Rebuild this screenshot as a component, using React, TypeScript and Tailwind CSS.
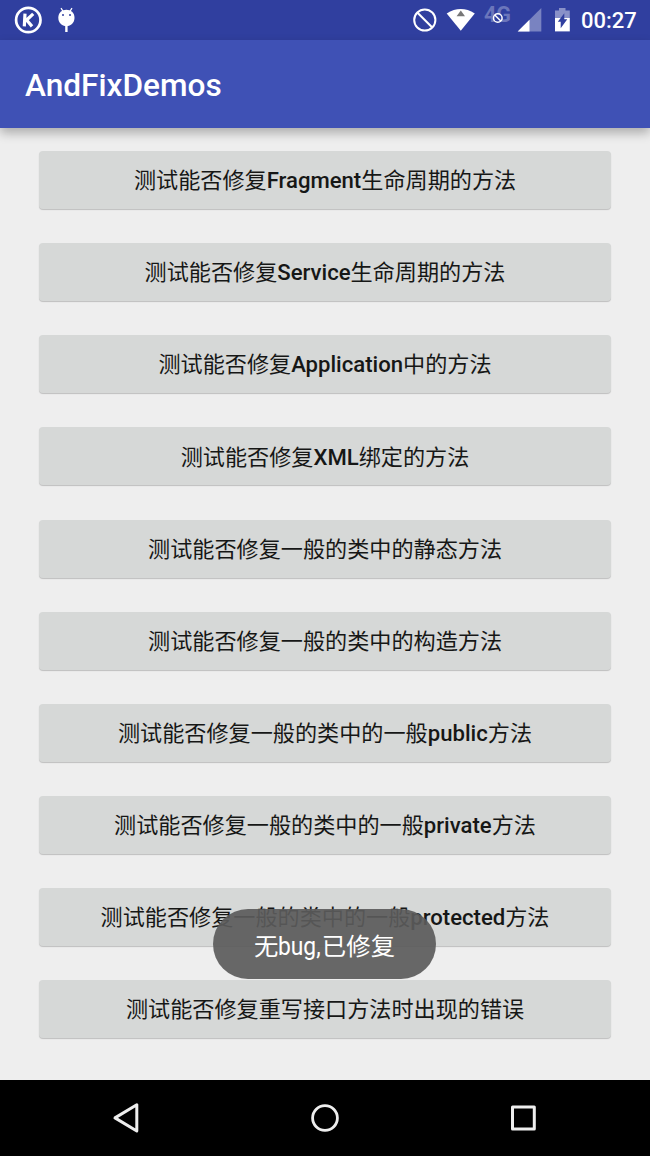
import React from "react";

const buttons = [
  ["测试能否修复", "Fragment", "生命周期的方法"],
  ["测试能否修复", "Service", "生命周期的方法"],
  ["测试能否修复", "Application", "中的方法"],
  ["测试能否修复", "XML", "绑定的方法"],
  ["测试能否修复一般的类中的静态方法"],
  ["测试能否修复一般的类中的构造方法"],
  ["测试能否修复一般的类中的一般", "public", "方法"],
  ["测试能否修复一般的类中的一般", "private", "方法"],
  ["测试能否修复一般的类中的一般", "protected", "方法"],
  ["测试能否修复重写接口方法时出现的错误"],
];

const StatusBar = () => (
  <div className="flex h-10 shrink-0 items-center bg-[#303f9f] text-white">
    <svg className="ml-[14px] h-10 w-7" viewBox="14 0 28 40" fill="none" stroke="#fff">
      <circle cx="28.3" cy="20" r="12.2" strokeWidth="2.7" />
      <path d="M25 13.6 24.3 26.4M33.2 13.8 26.6 20 32 26.4" strokeWidth="3.2" />
    </svg>
    <svg className="ml-[14px] h-10 w-5" viewBox="56 0 20 40" fill="#fff">
      <path d="M61 8.2 63.5 12M72 8.2 69.5 12" stroke="#fff" strokeWidth="1.3" />
      <path d="M58.3 17.8C58.3 12.5 62 9.8 66.4 9.8S74.5 12.5 74.5 17.8C74.5 22.8 71 26.2 66.4 26.2S58.3 22.8 58.3 17.8Z" />
      <path d="M65.2 26H67.6V32H65.2Z" />
      <circle cx="63" cy="15" r="1" fill="#303f9f" />
      <circle cx="70" cy="15" r="1" fill="#303f9f" />
    </svg>

    <svg className="ml-auto h-10 w-[26px]" viewBox="412 0 26 40" fill="none" stroke="#fff" strokeWidth="2">
      <circle cx="424.8" cy="20" r="10.6" />
      <path d="m417.3 12.5 15 15" />
    </svg>
    <svg className="ml-2 h-10 w-[30px]" viewBox="446 0 30 40" fill="#fff">
      <path d="M446.7 13.4Q460.8 4.6 474.8 13.4L460.8 30.8Z" />
      <path d="M460.8 10.6 465 16.2H456.6Z" fill="#777" />
    </svg>
    <div className="relative ml-2 h-10 w-[30px]">
      <span className="absolute left-0 top-[4px] font-['Roboto'] text-[21.5px] font-bold leading-[22px] text-[#6b76bb]">
        4G
      </span>
      <svg className="absolute left-0 top-0 h-10 w-[30px]" viewBox="484 0 30 40" fill="none" stroke="#fff" strokeWidth="1.5">
        <circle cx="497.8" cy="18" r="4.3" fill="#303f9f" />
        <path d="m494.8 15 6 6" />
      </svg>
    </div>
    <svg className="ml-[3px] h-10 w-[26px]" viewBox="517 0 26 40">
      <path d="M541.3 8V31.6H517.7Z" fill="#7983c1" />
      <path d="M529.5 19.8V31.6H517.7Z" fill="#fff" />
    </svg>
    <svg className="ml-[11px] h-10 w-4" viewBox="554 0 16 40">
      <path d="M555 10.5H559V8H565.5V10.5H569.8V18.5H555Z" fill="#8991c8" />
      <path d="M555 18H569.8V31.4H555Z" fill="#fff" />
      <path d="M564.3 13.2V19.2H567.3L560.7 28.2V21.8H557.8Z" fill="#303f9f" />
    </svg>
    <span className="ml-[11px] mr-[13px] w-14 pt-px font-['Roboto'] text-[22px] font-medium leading-none">
      00:27
    </span>
  </div>
);

const NavBar = () => (
  <div className="flex h-19 shrink-0 items-center justify-center gap-[158px] bg-black">
    <svg className="h-10 w-10" viewBox="0 0 40 40" fill="none" stroke="#eee" strokeWidth="3" strokeLinejoin="round">
      <path d="M29.8 6.8V33L8 19.9Z" />
    </svg>
    <svg className="h-10 w-10" viewBox="0 0 40 40" fill="none" stroke="#eee" strokeWidth="2.8">
      <circle cx="20" cy="20" r="12.4" />
    </svg>
    <svg className="h-10 w-10" viewBox="0 0 40 40" fill="none" stroke="#eee" strokeWidth="3" strokeLinejoin="round">
      <path d="M9.5 8.9H31.3V31.1H9.5Z" />
    </svg>
  </div>
);

export default function App() {
  return (
    <div className="relative flex h-[1156px] w-[650px] flex-col overflow-hidden bg-[#eee] font-['Roboto','Noto_Sans_CJK_SC',sans-serif]">
      <StatusBar />
      <div className="flex h-22 shrink-0 items-center bg-[#3f51b5] pl-[25px] pt-[3px] text-[31.6px] font-medium text-white shadow-[0_5px_10px_rgba(0,0,0,0.28)]">
        AndFixDemos
      </div>
      <div className="flex grow flex-col gap-[34.15px] px-[39px] pt-[23px]">
        {buttons.map((parts) => (
          <button
            key={parts.join("")}
            className="flex h-[58px] shrink-0 items-center justify-center rounded-[4px] bg-[#d6d8d7] pt-[1.5px] text-[22.14px] text-[#161716] shadow-[0_1px_1px_rgba(0,0,0,0.2)]"
          >
            {parts.map((part, i) => (
              <span key={i} className={i === 1 ? "font-medium" : "font-normal"}>
                {part}
              </span>
            ))}
          </button>
        ))}
      </div>
      <NavBar />

      {/* toast */}
      <div className="absolute left-[213px] top-[909px] flex h-[70px] w-[223px] items-baseline justify-center rounded-full bg-[#5b5b5b]/92 pt-[17px] text-[24.4px] text-white">
        <span>无</span>
        <span className="w-[43.5px] origin-left scale-x-[0.86] text-[26.5px]">bug,</span>
        <span>已修复</span>
      </div>
    </div>
  );
}
